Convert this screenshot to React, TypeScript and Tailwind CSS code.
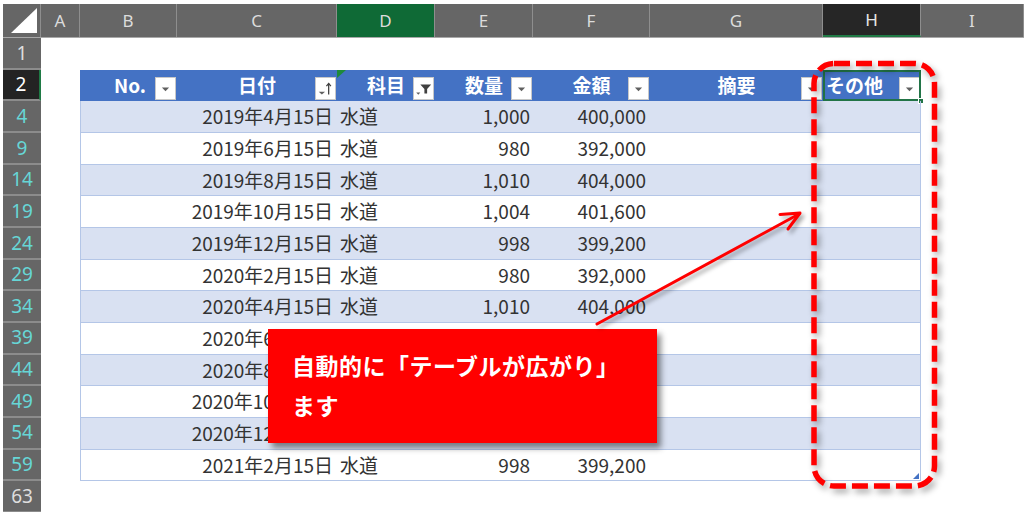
import React from "react";

const colHeaders: { l: string; cls: string }[] = [
  { l: "A", cls: "w-[39px] bg-[#666666] text-[#dcdcdc]" },
  { l: "B", cls: "w-[97px] bg-[#666666] text-[#dcdcdc]" },
  { l: "C", cls: "w-[160px] bg-[#666666] text-[#dcdcdc]" },
  { l: "D", cls: "w-[98px] bg-[#0f6a36] text-[#dcdcdc]" },
  { l: "E", cls: "w-[98px] bg-[#666666] text-[#dcdcdc]" },
  { l: "F", cls: "w-[117px] bg-[#666666] text-[#dcdcdc]" },
  { l: "G", cls: "w-[173px] bg-[#666666] text-[#dcdcdc]" },
  { l: "H", cls: "w-[98px] bg-[#262626] text-[#e6e6e6] border-b-2 border-b-[#1f7a45]" },
  { l: "I", cls: "flex-1 bg-[#666666] text-[#dcdcdc]" },
];

const rowNums = ["1", "2", "4", "9", "14", "19", "24", "29", "34", "39", "44", "49", "54", "59", "63"];

const data: [string, string, string, string][] = [
  ["2019年4月15日", "水道", "1,000", "400,000"],
  ["2019年6月15日", "水道", "980", "392,000"],
  ["2019年8月15日", "水道", "1,010", "404,000"],
  ["2019年10月15日", "水道", "1,004", "401,600"],
  ["2019年12月15日", "水道", "998", "399,200"],
  ["2020年2月15日", "水道", "980", "392,000"],
  ["2020年4月15日", "水道", "1,010", "404,000"],
  ["2020年6月15日", "", "", ""],
  ["2020年8月15日", "", "", ""],
  ["2020年10月15日", "", "", ""],
  ["2020年12月15日", "", "", ""],
  ["2021年2月15日", "水道", "998", "399,200"],
];

function DropBtn({ kind = "plain" }: { kind?: "plain" | "sort" | "filter" }) {
  return (
    <div className="absolute right-[1px] bottom-[1px] w-[21px] h-[23px] bg-white border border-[#c8c8c8] flex items-center justify-center">
      <svg width="21" height="23" viewBox="0 0 21 23">
        {kind === "plain" && <polygon points="6.5,10.5 14.5,10.5 10.5,14.5" fill="#606060" />}
        {kind === "sort" && (
          <g>
            <polygon points="3,15 10,15 6.5,18" fill="#606060" />
            <line x1="14" y1="18" x2="14" y2="6" stroke="#404040" strokeWidth="1.4" />
            <polyline points="11.5,9 14,6 16.5,9" fill="none" stroke="#404040" strokeWidth="1.3" />
          </g>
        )}
        {kind === "filter" && (
          <g>
            <polygon points="2.5,16 7,16 4.75,18.5" fill="#606060" />
            <polygon points="7,7 19,7 14.5,12 14.5,17 11.5,17 11.5,12" fill="#404040" />
          </g>
        )}
      </svg>
    </div>
  );
}

export default function App() {
  const jp = "font-['Noto_Sans_CJK_JP','Noto_Sans',sans-serif]";
  return (
    <div className={`relative w-[1024px] h-[512px] overflow-hidden bg-white ${jp}`}>
      <div className="pt-[4px] pl-[3px]">
        {/* Column header row */}
        <div className="flex h-[34px] border-b border-[#a8a8a8]">
          <div className="w-[38px] bg-[#666666] border-r border-[#8e8e8e] flex items-end justify-end pr-[2px] pb-[3px]">
            <svg width="27" height="26" viewBox="0 0 27 26">
              <polygon points="0,25 26,0 26,25" fill="#ffffff" />
            </svg>
          </div>
          {colHeaders.map((c) => (
            <div
              key={c.l}
              className={`${c.cls} border-r border-[#8e8e8e] flex items-center justify-center text-[17px] font-['Noto_Sans',sans-serif]`}
            >
              {c.l}
            </div>
          ))}
        </div>

        <div className="flex">
          {/* Row headers */}
          <div className="w-[38px] flex flex-col shrink-0">
            {rowNums.map((n) => {
              const cls =
                n === "2"
                  ? "bg-[#232323] text-white border-r-2 border-r-[#1f7a45]"
                  : n === "1" || n === "63"
                  ? "bg-[#666666] text-[#dedede]"
                  : "bg-[#666666] text-[#66d6d6]";
              return (
                <div
                  key={n}
                  className={`h-[31.67px] flex items-center justify-center border-b-2 border-b-[#8c8c8c] text-[19px] font-['Noto_Sans',sans-serif] ${cls}`}
                >
                  {n}
                </div>
              );
            })}
          </div>

          {/* Sheet area */}
          <div className="flex-1">
            <div className="h-[31.67px]" />
            <div className="ml-[39px] w-[841px]">
              {/* Table header */}
              <div className="grid grid-cols-[97px_160px_98px_98px_117px_173px_98px] h-[31.67px] bg-[#4472c4] text-white font-bold text-[19px]">
                <div className="relative flex items-center justify-center pl-[3px]">
                  No.
                  <DropBtn />
                </div>
                <div className="relative flex items-center justify-center">
                  日付
                  <DropBtn kind="sort" />
                </div>
                <div className="relative flex items-center justify-center">
                  <svg className="absolute left-0 top-0" width="9" height="8" viewBox="0 0 9 8">
                    <polygon points="0,0 9,0 0,8" fill="#1e8a3c" />
                  </svg>
                  科目
                  <DropBtn kind="filter" />
                </div>
                <div className="relative flex items-center justify-center">
                  数量
                  <DropBtn />
                </div>
                <div className="relative flex items-center justify-center">
                  金額
                  <DropBtn />
                </div>
                <div className="relative flex items-center justify-center">
                  摘要
                  <DropBtn />
                </div>
                <div className="relative flex items-center pl-[3px]">
                  その他
                  <DropBtn />
                  <div className="absolute inset-0 border-2 border-[#227447]" />
                  <div className="absolute right-[-3px] bottom-[-3px] w-[6px] h-[6px] bg-[#227447] border border-white" />
                </div>
              </div>
              {/* Data rows */}
              {data.map((r, i) => (
                <div
                  key={i}
                  className={`grid grid-cols-[97px_160px_98px_98px_117px_173px_98px] h-[31.67px] border-b border-[#b4c6e7] text-[19px] text-[#333333] ${
                    i % 2 === 0 ? "bg-[#d9e1f2]" : "bg-white"
                  }`}
                >
                  <div className="border-l border-[#b4c6e7]" />
                  <div className="flex items-center justify-end pr-[4px] whitespace-nowrap">{r[0]}</div>
                  <div className="flex items-center pl-[3px]">{r[1]}</div>
                  <div className="flex items-center justify-end pr-[3px]">{r[2]}</div>
                  <div className="flex items-center justify-end pr-[4px]">{r[3]}</div>
                  <div />
                  <div className="relative border-r border-[#b4c6e7]">
                    {i === data.length - 1 && (
                      <svg className="absolute right-[1px] bottom-[1px]" width="6" height="6" viewBox="0 0 6 6">
                        <polygon points="6,0 6,6 0,6" fill="#4472c4" />
                      </svg>
                    )}
                  </div>
                </div>
              ))}
            </div>
          </div>
        </div>
      </div>

      {/* Callout */}
      <div className="absolute left-[268px] top-[329px] w-[389px] h-[114px] bg-[#ff0000] shadow-[4px_5px_6px_rgba(0,0,0,0.45)] pl-[24px] pt-[16px] text-white font-bold text-[23px] leading-[40px] tracking-[0.5px]">
        <div>自動的に「テーブルが広がり」</div>
        <div>ます</div>
      </div>

      {/* Arrow */}
      <svg
        className="absolute left-[590px] top-[205px] [filter:drop-shadow(3px_3px_2px_rgba(0,0,0,0.35))]"
        width="220"
        height="130"
        viewBox="0 0 220 130"
      >
        <line x1="7" y1="119" x2="209" y2="9" stroke="#ff0000" strokeWidth="3" strokeLinecap="round" />
        <polyline points="190,9.5 210,8 198,24" fill="none" stroke="#ff0000" strokeWidth="3" strokeLinecap="round" strokeLinejoin="round" />
      </svg>

      {/* Dashed rounded rectangle */}
      <svg
        className="absolute left-[806px] top-[56px] [filter:drop-shadow(3px_4px_3px_rgba(0,0,0,0.35))]"
        width="140"
        height="444"
        viewBox="0 0 140 444"
      >
        <rect
          x="8"
          y="7.5"
          width="120.5"
          height="422.5"
          rx="20"
          fill="none"
          stroke="#ff0000"
          strokeWidth="5.5"
          strokeDasharray="16 6"
        />
      </svg>
    </div>
  );
}
